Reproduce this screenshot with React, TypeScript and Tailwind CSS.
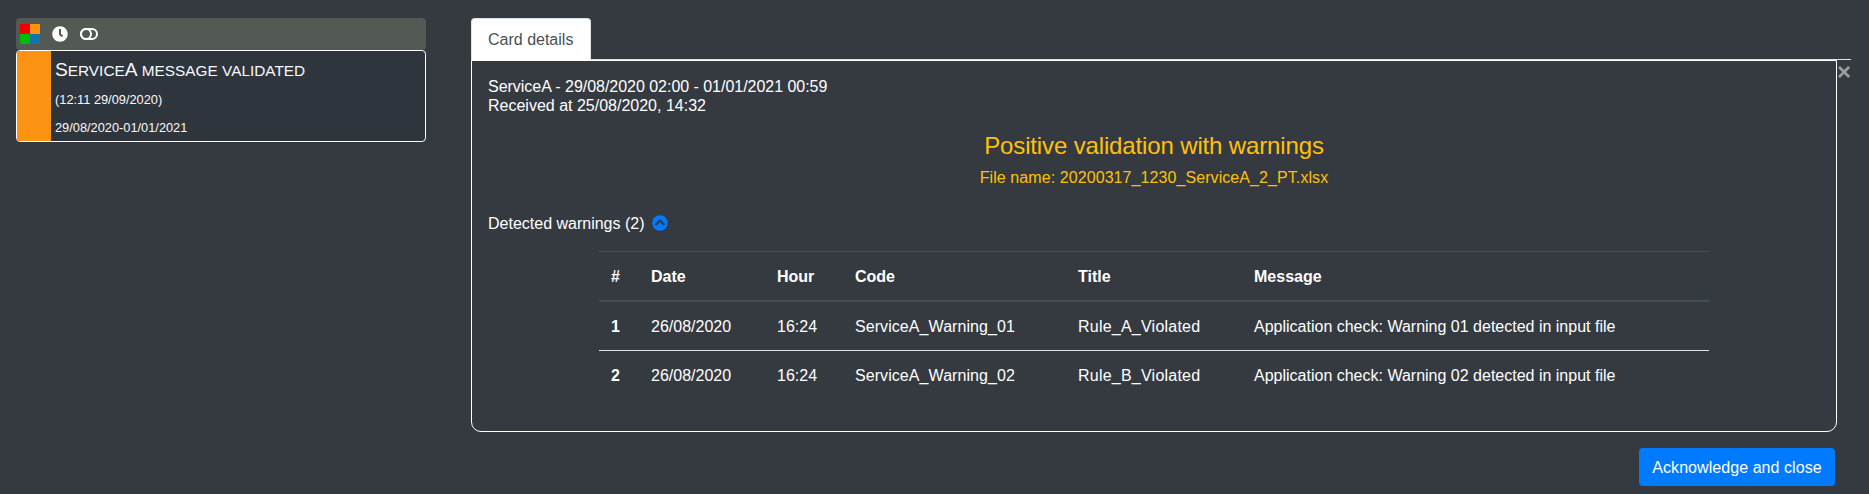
import { FaClock, FaChevronCircleUp } from "react-icons/fa";

const warnings = [
  { id: 1, code: "ServiceA_Warning_01", title: "Rule_A_Violated", message: "Application check: Warning 01 detected in input file" },
  { id: 2, code: "ServiceA_Warning_02", title: "Rule_B_Violated", message: "Application check: Warning 02 detected in input file" },
];

function Logo() {
  return (
    <div className="grid h-5 w-5 grid-cols-2">
      <span className="bg-[#f00000]" />
      <span className="bg-[#fd9313]" />
      <span className="bg-[#00bb03]" />
      <span className="bg-[#1074ad]" />
    </div>
  );
}

function ToggleIcon() {
  return (
    <svg className="h-3 w-[18px]" viewBox="0 0 18 12" fill="none" stroke="#fff" strokeWidth="2">
      <rect x="1" y="1" width="16" height="10" rx="5" />
      <circle cx="6" cy="6" r="5" />
    </svg>
  );
}

function FeedCard() {
  return (
    <div className="w-[410px]">
      <div className="flex h-8 items-center rounded bg-[#535953] pl-1 text-white">
        <Logo />
        <FaClock className="ml-3 h-4 w-4" />
        <div className="ml-3">
          <ToggleIcon />
        </div>
      </div>
      <div className="flex h-[92px] overflow-hidden rounded border border-white bg-[#2f353d]">
        <div className="w-[34px] bg-[#fd9313]" />
        <div className="pl-1 text-[12.8px] text-[#f8f9fa]">
          <div className="mt-[7px] h-6 text-[19.2px] leading-6">
            S<span className="text-[15.36px] uppercase">ervice</span>A{" "}
            <span className="text-[15.36px] uppercase">message validated</span>
          </div>
          <div className="mt-2 leading-5">(12:11 29/09/2020)</div>
          <div className="mt-2 leading-5">29/08/2020-01/01/2021</div>
        </div>
      </div>
    </div>
  );
}

function WarningsTable() {
  return (
    <table className="mx-auto w-[1110px] table-fixed border-separate border-spacing-0 text-left [&_td]:px-3 [&_td]:pt-[13px] [&_td]:pb-[11px] [&_th]:px-3 [&_th]:pt-[13px] [&_th]:pb-[11px]">
      <colgroup>
        <col className="w-[40px]" />
        <col className="w-[126px]" />
        <col className="w-[78px]" />
        <col className="w-[223px]" />
        <col className="w-[176px]" />
        <col className="w-[467px]" />
      </colgroup>
      <thead>
        <tr>
          {["#", "Date", "Hour", "Code", "Title", "Message"].map((h) => (
            <th key={h} className="border-t border-b-2 border-t-[#454d55] border-b-[#454d55] font-bold">
              {h}
            </th>
          ))}
        </tr>
      </thead>
      <tbody className="[&>tr:first-child>*]:border-b [&>tr:first-child>*]:border-[#dee2e6]">
        {warnings.map((w) => (
          <tr key={w.id}>
            <th className="font-bold">{w.id}</th>
            <td>26/08/2020</td>
            <td>16:24</td>
            <td className="tracking-[0.07px]">{w.code}</td>
            <td className="tracking-[0.23px]">{w.title}</td>
            <td>{w.message}</td>
          </tr>
        ))}
      </tbody>
    </table>
  );
}

export default function App() {
  return (
    <div className="flex h-[494px] w-[1869px] overflow-hidden bg-[#353a41] pt-[18px] pl-4 font-['Liberation_Sans',sans-serif] text-base text-white">
      <FeedCard />
      <main className="ml-[45px] w-[1380px]">
        <div className="flex h-[42px] border-b border-[#dee2e6]">
          <div className="-mb-px h-[42px] w-[120px] rounded-t border border-b-0 border-[#dee2e6] bg-white px-4 py-2 leading-[26px] text-[#495057]">
            Card details
          </div>
        </div>
        <div className="flex">
          <section className="h-[372px] w-[1366px] rounded-b-[10px] border border-white px-4 pt-4">
            <div className="leading-[19px]">
              <div className="tracking-[-0.03px]">ServiceA - 29/08/2020 02:00 - 01/01/2021 00:59</div>
              <div>Received at 25/08/2020, 14:32</div>
            </div>
            <div className="mt-4 text-center text-[#ffc107]">
              <h4 className="text-2xl leading-[29px] tracking-[-0.14px]">Positive validation with warnings</h4>
              <div className="mt-1.5 leading-6 tracking-[0.08px]">File name: 20200317_1230_ServiceA_2_PT.xlsx</div>
            </div>
            <div className="mt-[21px] mb-4 flex h-6 items-center">
              <span className="pt-0.5 leading-6">Detected warnings (2)</span>
              <FaChevronCircleUp className="ml-[7px] h-4 w-4 text-[#007bff]" />
            </div>
            <WarningsTable />
          </section>
          <button className="h-6 w-[14px] text-2xl leading-6 font-bold text-[#9a9da0]">×</button>
        </div>
        <button className="mt-4 ml-[1168px] block h-[38px] w-[196px] rounded bg-[#007bff] text-center leading-[40px] tracking-[0.06px] text-white">
          Acknowledge and close
        </button>
      </main>
    </div>
  );
}
